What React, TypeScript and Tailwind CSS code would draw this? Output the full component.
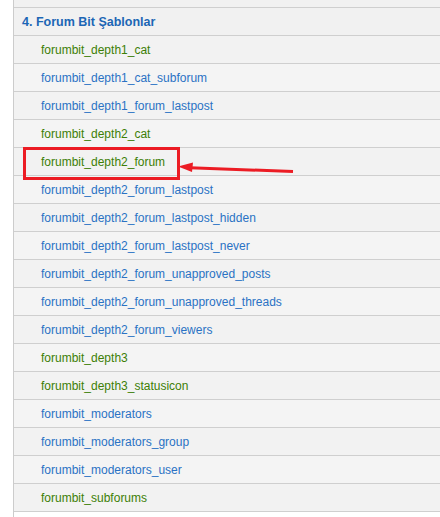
import React from "react";

const rows: { name: string; green: boolean }[] = [
  { name: "forumbit_depth1_cat", green: true },
  { name: "forumbit_depth1_cat_subforum", green: false },
  { name: "forumbit_depth1_forum_lastpost", green: false },
  { name: "forumbit_depth2_cat", green: true },
  { name: "forumbit_depth2_forum", green: true },
  { name: "forumbit_depth2_forum_lastpost", green: false },
  { name: "forumbit_depth2_forum_lastpost_hidden", green: false },
  { name: "forumbit_depth2_forum_lastpost_never", green: false },
  { name: "forumbit_depth2_forum_unapproved_posts", green: false },
  { name: "forumbit_depth2_forum_unapproved_threads", green: false },
  { name: "forumbit_depth2_forum_viewers", green: false },
  { name: "forumbit_depth3", green: true },
  { name: "forumbit_depth3_statusicon", green: true },
  { name: "forumbit_moderators", green: false },
  { name: "forumbit_moderators_group", green: false },
  { name: "forumbit_moderators_user", green: false },
  { name: "forumbit_subforums", green: true },
];

export default function App() {
  return (
    <div
      className="relative flex w-[440px] h-[517px] overflow-hidden bg-white"
      style={{ fontFamily: '"Liberation Sans", Arial, sans-serif' }}
    >
      <div className="w-[13px] shrink-0 bg-white" />
      <div className="flex-1 flex flex-col border-l border-[#cccccc]">
        <div className="h-[8px] shrink-0 bg-[#f1f1f1] border-b border-[#cfcfcf]" />
        <div className="h-[28px] shrink-0 flex items-center pl-[8px] pt-[1px] bg-[#f1f1f1] border-b border-[#cfcfcf]">
          <span className="text-[12.5px] font-bold text-[#1c66b5]">4. Forum Bit Şablonlar</span>
        </div>
        {rows.map((r, i) => (
          <div
            key={r.name}
            className={
              "relative h-[28px] shrink-0 flex items-center pl-[27px] pt-[1px] border-b border-[#cfcfcf] " +
              (i % 2 === 0 ? "bg-[#f2f2f2]" : "bg-[#f4f4f4]")
            }
          >
            <span className={"text-[12px] " + (r.green ? "text-[#3d7f06]" : "text-[#2a72c4]")}>{r.name}</span>
          </div>
        ))}
      </div>
      <div className="absolute left-[23px] top-[147px] w-[157px] h-[33px] border-[3px] border-[#ec1c24]" />
      <svg className="absolute left-0 top-0" width="440" height="517" viewBox="0 0 440 517">
        <line x1="190" y1="167.8" x2="293" y2="171.5" stroke="#ec1c24" strokeWidth="3" />
        <polygon points="178,166.5 193,162.5 192,172" fill="#ec1c24" />
      </svg>
    </div>
  );
}
